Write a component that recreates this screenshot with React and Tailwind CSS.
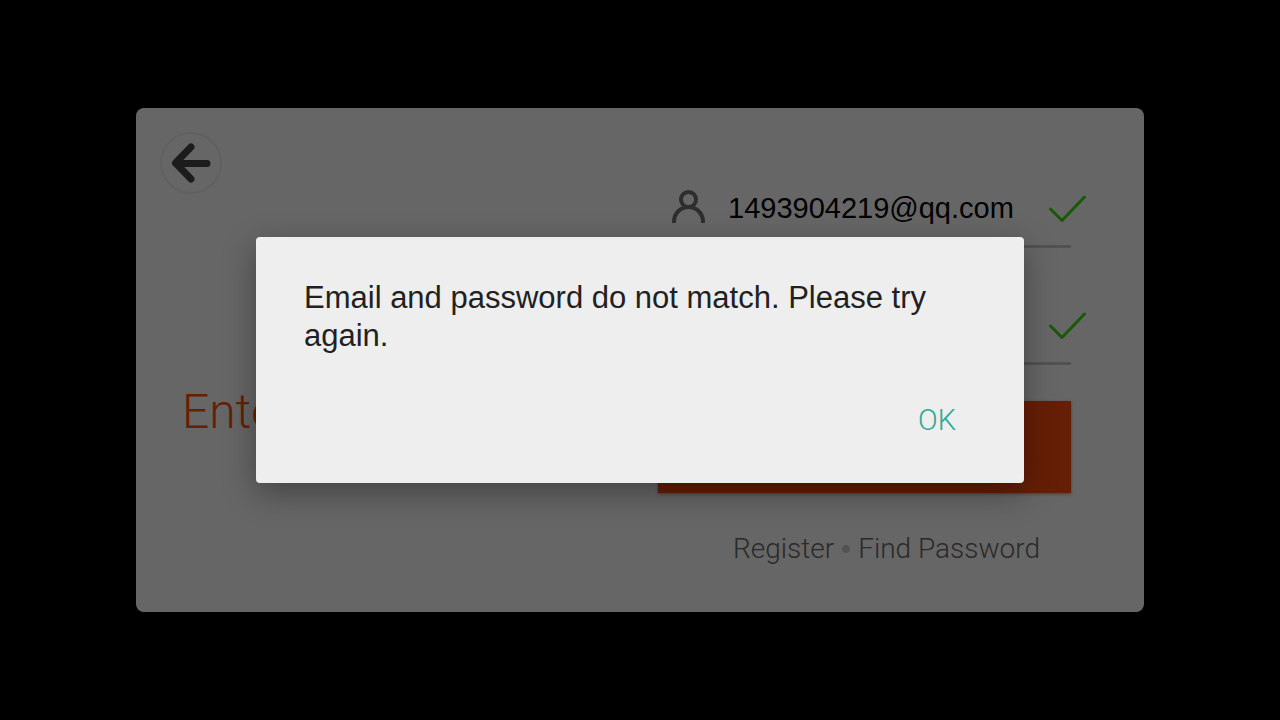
import { useState } from "react";

function BackIcon() {
    return (
        <svg width="62" height="62" viewBox="0 0 62 62" fill="none" aria-hidden="true">
            <circle cx="31" cy="31" r="30" stroke="#f0f0f0" strokeWidth="2" />
            <path
                d="M31 15 L15.5 31 L31 47 M16 31.5 H47"
                stroke="#464646"
                strokeWidth="7"
                strokeLinecap="round"
                strokeLinejoin="round"
            />
        </svg>
    );
}

function UserIcon() {
    return (
        <svg width="34" height="36" viewBox="0 0 34 36" fill="none" stroke="#737373" strokeWidth="4" aria-hidden="true">
            <circle cx="16.5" cy="9.5" r="7.5" />
            <path d="M2 33 V31.5 A14.5 14.5 0 0 1 31 31.5 V33" />
        </svg>
    );
}

function LockIcon() {
    return (
        <svg width="34" height="36" viewBox="0 0 34 36" fill="none" stroke="#737373" strokeWidth="4" aria-hidden="true">
            <rect x="4" y="14" width="26" height="18" />
            <path d="M10 14 V9 A7 7 0 0 1 24 9 V14" />
        </svg>
    );
}

function CheckIcon() {
    return (
        <svg
            className="shrink-0"
            width="38"
            height="32"
            viewBox="0 0 38 32"
            fill="none"
            stroke="#41de0c"
            strokeWidth="3"
            strokeLinecap="round"
            strokeLinejoin="round"
            aria-hidden="true"
        >
            <path d="M1.5 17 L13 28.5 L35.5 5" />
        </svg>
    );
}

function Field({ icon, label, ...props }) {
    return (
        <div className="border-b-3 border-[#cdcdcd]">
            <label className="-mr-4 flex h-[75px] items-center pl-[14px]">
                <span className="shrink-0">{icon}</span>
                <input
                    aria-label={label}
                    className="ml-[22px] mr-5 min-w-0 flex-1 bg-transparent text-[29px] leading-9 text-black outline-none"
                    {...props}
                />
                <CheckIcon />
            </label>
        </div>
    );
}

export default function App() {
    const [email, setEmail] = useState("1493904219@qq.com");
    const [password, setPassword] = useState("");
    const [open, setOpen] = useState(true);

    return (
        <div className="relative flex min-h-screen items-center bg-black px-34 font-['Liberation_Sans',Arial,sans-serif]">
            <main className="flex w-full rounded-lg bg-white pb-[45px]">
                <section className="flex flex-1 flex-col p-6">
                    <button type="button" aria-label="Back" className="self-start">
                        <BackIcon />
                    </button>
                    <h1 className="mt-[190px] pl-[22px] font-['Roboto',sans-serif] text-[48px] leading-14 font-[350] text-[#ff5000]">
                        Enter
                    </h1>
                </section>
                <form
                    className="mr-[73px] w-[413px] pt-[62px]"
                    onSubmit={(e) => e.preventDefault()}
                >
                    <Field
                        icon={<UserIcon />}
                        label="Email"
                        type="text"
                        value={email}
                        onChange={(e) => setEmail(e.target.value)}
                    />
                    <div className="mt-[39px]">
                        <Field
                            icon={<LockIcon />}
                            label="Password"
                            type="password"
                            value={password}
                            onChange={(e) => setPassword(e.target.value)}
                        />
                    </div>
                    <button
                        type="submit"
                        aria-label="Log in"
                        className="mt-9 block h-[92px] w-full bg-[#ff4b0f] shadow-[0_1px_3px_rgba(0,0,0,0.4)]"
                    />
                    <nav className="mt-[38px] flex items-center justify-end gap-2 pr-[31px] font-['Roboto',sans-serif] text-[28px] leading-9 font-[350] text-[#6a6a6a]">
                        <a href="#register">Register</a>
                        <span className="size-2 rounded-full bg-[#cfcfcf]" />
                        <a href="#find-password">Find Password</a>
                    </nav>
                </form>
            </main>

            {open && (
                <div className="absolute inset-0 flex items-center justify-center bg-black/60">
                    <div
                        role="alertdialog"
                        aria-describedby="login-error"
                        className="flex w-3/5 flex-col rounded bg-[#eeeeee] px-12 pt-[42px] pb-[35px] shadow-[0_10px_32px_rgba(0,0,0,0.35)]"
                    >
                        <p id="login-error" className="text-[31px] leading-[38px] text-[#212121]">
                            Email and password do not match. Please try again.
                        </p>
                        <button
                            type="button"
                            className="mt-[37px] mr-5 self-end py-2 font-['Roboto',sans-serif] text-[29px] leading-10 font-[350] text-[#2fa898]"
                            onClick={() => setOpen(false)}
                        >
                            OK
                        </button>
                    </div>
                </div>
            )}
        </div>
    );
}
